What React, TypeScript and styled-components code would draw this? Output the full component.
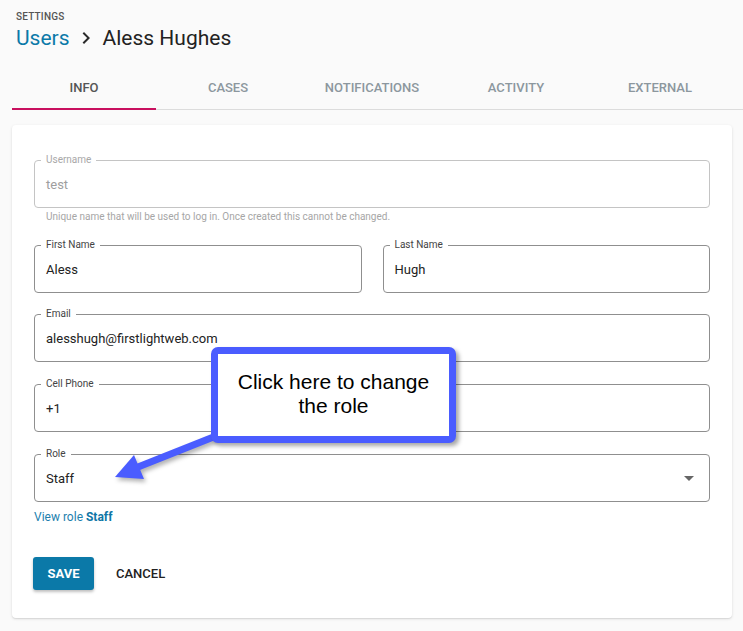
import React from "react";
import styled, { createGlobalStyle } from "styled-components";

const GlobalStyle = createGlobalStyle`
  html, body { margin: 0; padding: 0; background: #fafafa; }
  body { font-family: Roboto, "Noto Sans", Arial, sans-serif; }
  * { box-sizing: border-box; }
`;

const Page = styled.div`
  position: relative;
  width: 743px;
  height: 631px;
  overflow: hidden;
  padding: 11px 0 0 12px;
`;

const Header = styled.header`
  padding-left: 4px;
`;

const Overline = styled.div`
  font-size: 10px;
  line-height: 12px;
  font-weight: 500;
  color: #555;
  letter-spacing: 0.2px;
`;

const Title = styled.h1`
  margin: 1px 0 0;
  display: flex;
  align-items: center;
  font-size: 21px;
  line-height: 28px;
  font-weight: 400;
  color: #222;
`;

const Crumb = styled.span`
  color: #0b79a8;
`;

const Chevron = styled.svg`
  width: 24px;
  height: 24px;
  margin: 0 5px 0 4px;
  fill: #2a2a2a;
`;

const TabBar = styled.nav`
  display: flex;
  margin-top: 12px;
  border-bottom: 1px solid #dcdcdc;
`;

const Tab = styled.div<{ $active?: boolean }>`
  position: relative;
  width: 144px;
  height: 45px;
  padding-top: 2px;
  display: flex;
  align-items: center;
  justify-content: center;
  font-size: 13px;
  font-weight: 500;
  text-transform: uppercase;
  color: ${(p) => (p.$active ? "#555" : "#8c979e")};
  &::after {
    content: "";
    display: ${(p) => (p.$active ? "block" : "none")};
    position: absolute;
    left: 0;
    right: 0;
    bottom: -1px;
    height: 2px;
    background: #c8105e;
  }
`;

const Card = styled.section`
  margin-top: 15px;
  width: 720px;
  background: #fff;
  border-radius: 4px;
  box-shadow: 0 1px 3px rgba(0, 0, 0, 0.12), 0 1px 1px rgba(0, 0, 0, 0.06);
  padding: 35px 22px 28px;
  display: flex;
  flex-direction: column;
`;

const Row = styled.div`
  display: grid;
  grid-template-columns: 1fr 1fr;
  gap: 21px;
  margin-top: 22px;
`;

const FieldWrap = styled.div<{ $mt?: number }>`
  position: relative;
  margin-top: ${(p) => p.$mt ?? 0}px;
`;

const FieldBox = styled.div<{ $disabled?: boolean }>`
  height: 48px;
  border: 1px solid ${(p) => (p.$disabled ? "#c4c4c4" : "#8f8f8f")};
  border-radius: 4px;
  padding: 0 11px;
  display: flex;
  align-items: center;
  justify-content: space-between;
  font-size: 13px;
  color: ${(p) => (p.$disabled ? "#9e9e9e" : "#222")};
`;

const FieldLabel = styled.span<{ $disabled?: boolean }>`
  position: absolute;
  top: -6px;
  left: 7px;
  padding: 0 5px;
  background: #fff;
  font-size: 10px;
  line-height: 12px;
  color: ${(p) => (p.$disabled ? "#a8a8a8" : "#444")};
`;

const Helper = styled.div`
  margin-top: 3px;
  padding-left: 12px;
  font-size: 10px;
  line-height: 12px;
  color: #a6a6a6;
`;

const Caret = styled.span`
  width: 0;
  height: 0;
  border-left: 5px solid transparent;
  border-right: 5px solid transparent;
  border-top: 5px solid #666;
  margin-right: 4px;
`;

const RoleLink = styled.div`
  margin-top: 7px;
  font-size: 12px;
  line-height: 16px;
  color: #1d7fae;
  b { font-weight: 700; color: #0f76a6; }
`;

const Actions = styled.div`
  margin-top: 32px;
  display: flex;
  align-items: center;
  gap: 22px;
`;

const SaveButton = styled.button`
  margin-left: -1px;
  width: 61px;
  height: 33px;
  border: none;
  border-radius: 3px;
  background: #0b79a8;
  color: #fff;
  font-family: inherit;
  font-size: 13px;
  font-weight: 700;
  box-shadow: 0 2px 3px rgba(0, 0, 0, 0.25);
`;

const TextButton = styled.button`
  border: none;
  background: none;
  padding: 0;
  font-family: inherit;
  font-size: 13px;
  font-weight: 500;
  color: #222;
`;

const Callout = styled.div`
  position: absolute;
  left: 211px;
  top: 347px;
  width: 245px;
  height: 96px;
  border: 7px solid #4a5cff;
  border-radius: 7px;
  background: #fff;
  box-shadow: 3px 3px 4px rgba(0, 0, 0, 0.35);
  display: flex;
  align-items: center;
  justify-content: center;
  text-align: center;
  font-family: "Liberation Sans", Arial, sans-serif;
  font-size: 21px;
  line-height: 24px;
  color: #000;
  padding-bottom: 2px;
`;

const ArrowLayer = styled.svg`
  position: absolute;
  left: 0;
  top: 0;
  width: 743px;
  height: 631px;
  pointer-events: none;
  filter: drop-shadow(2px 3px 2px rgba(0, 0, 0, 0.3));
`;

type FieldProps = {
  label: string;
  value: string;
  disabled?: boolean;
  select?: boolean;
  mt?: number;
};

function Field({ label, value, disabled, select, mt }: FieldProps) {
  return (
    <FieldWrap $mt={mt}>
      <FieldBox $disabled={disabled}>
        <span>{value}</span>
        {select && <Caret />}
      </FieldBox>
      <FieldLabel $disabled={disabled}>{label}</FieldLabel>
    </FieldWrap>
  );
}

const tabs = ["Info", "Cases", "Notifications", "Activity", "External"];

export default function App() {
  return (
    <>
      <GlobalStyle />
      <Page>
        <Header>
          <Overline>SETTINGS</Overline>
          <Title>
            <Crumb>Users</Crumb>
            <Chevron viewBox="0 0 24 24">
              <path d="M8.59 16.59L13.17 12 8.59 7.41 10 6l6 6-6 6z" />
            </Chevron>
            Aless Hughes
          </Title>
        </Header>
        <TabBar>
          {tabs.map((t, i) => (
            <Tab key={t} $active={i === 0}>
              {t}
            </Tab>
          ))}
        </TabBar>
        <Card>
          <Field label="Username" value="test" disabled />
          <Helper>Unique name that will be used to log in. Once created this cannot be changed.</Helper>
          <Row>
            <Field label="First Name" value="Aless" />
            <Field label="Last Name" value="Hugh" />
          </Row>
          <Field label="Email" value="alesshugh@firstlightweb.com" mt={21} />
          <Field label="Cell Phone" value="+1" mt={22} />
          <Field label="Role" value="Staff" select mt={22} />
          <RoleLink>
            View role <b>Staff</b>
          </RoleLink>
          <Actions>
            <SaveButton>SAVE</SaveButton>
            <TextButton>CANCEL</TextButton>
          </Actions>
        </Card>
        <ArrowLayer viewBox="0 0 743 631">
          <line x1="216" y1="436" x2="138" y2="467" stroke="#4a5cff" strokeWidth="7" />
          <polygon points="115,477 134,455 144,479" fill="#4a5cff" />
        </ArrowLayer>
        <Callout>
          Click here to change
          <br />
          the role
        </Callout>
      </Page>
    </>
  );
}
